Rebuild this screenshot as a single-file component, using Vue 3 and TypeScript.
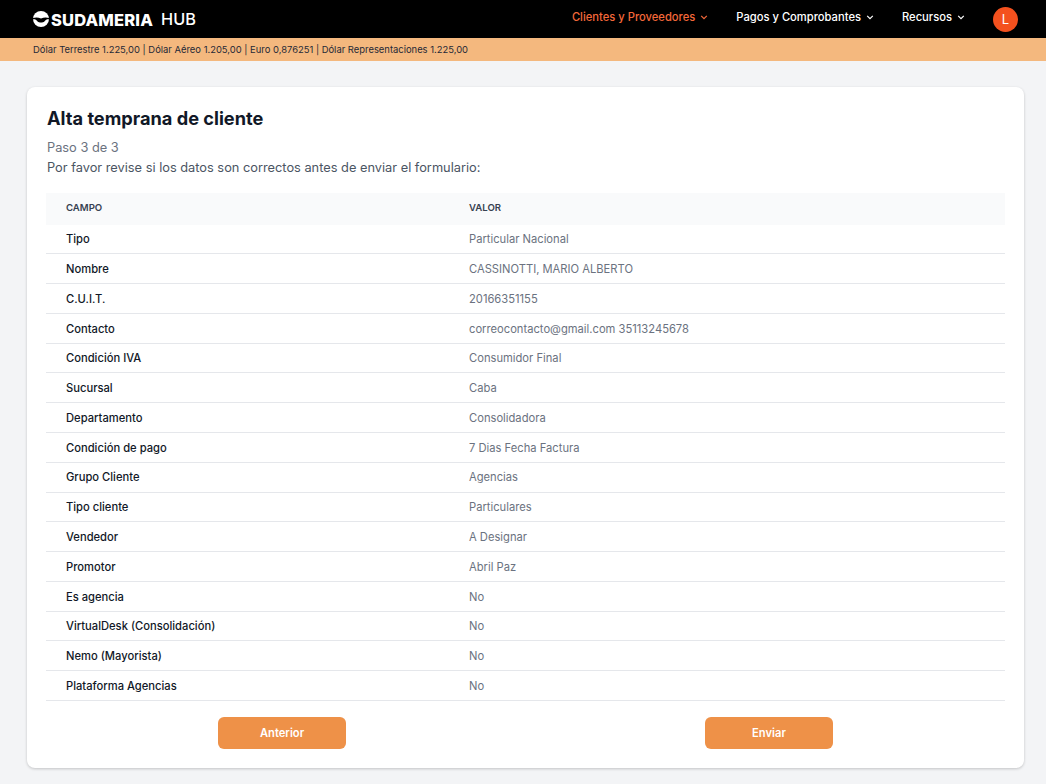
<template>
  <div class="page">
    <header class="topbar">
      <div class="brand">
        <svg class="brand-icon" viewBox="0 0 16 16">
          <circle cx="8" cy="8" r="8" fill="#fff" />
          <path d="M0 7 C3 6 5.5 6.4 8 7.6 C10.5 6.4 13 6 16 7 L16 8.4 C14 8.2 12.8 8.8 11.4 10.4 C10 11.8 6 11.8 4.6 10.4 C3.2 8.8 2 8.2 0 8.4 Z" fill="#000" />
        </svg>
        <span class="brand-name">SUDAMERIA</span>
        <span class="brand-hub">HUB</span>
      </div>
      <nav class="menu">
        <a v-for="item in menu" :key="item.label" class="menu-item" :class="{ active: item.active }">
          {{ item.label }}
          <svg viewBox="0 0 10 10" width="8" height="8"><path d="M1.5 3.5 L5 7 L8.5 3.5" fill="none" stroke="currentColor" stroke-width="1.5" /></svg>
        </a>
        <span class="avatar">L</span>
      </nav>
    </header>
    <div class="rates">Dólar Terrestre 1.225,00 | Dólar Aéreo 1.205,00 | Euro 0,876251 | Dólar Representaciones 1.225,00</div>
    <main class="content">
      <section class="card">
        <h1>Alta temprana de cliente</h1>
        <p class="step">Paso 3 de 3</p>
        <p class="hint">Por favor revise si los datos son correctos antes de enviar el formulario:</p>
        <table>
          <thead>
            <tr>
              <th>CAMPO</th>
              <th>VALOR</th>
            </tr>
          </thead>
          <tbody>
            <tr v-for="row in rows" :key="row[0]">
              <td class="field">{{ row[0] }}</td>
              <td class="value">{{ row[1] }}</td>
            </tr>
          </tbody>
        </table>
        <div class="actions">
          <button>Anterior</button>
          <button>Enviar</button>
        </div>
      </section>
    </main>
  </div>
</template>

<script setup lang="ts">
const menu = [
  { label: 'Clientes y Proveedores', active: true },
  { label: 'Pagos y Comprobantes', active: false },
  { label: 'Recursos', active: false },
];

const rows: [string, string][] = [
  ['Tipo', 'Particular Nacional'],
  ['Nombre', 'CASSINOTTI, MARIO ALBERTO'],
  ['C.U.I.T.', '20166351155'],
  ['Contacto', 'correocontacto@gmail.com 35113245678'],
  ['Condición IVA', 'Consumidor Final'],
  ['Sucursal', 'Caba'],
  ['Departamento', 'Consolidadora'],
  ['Condición de pago', '7 Dias Fecha Factura'],
  ['Grupo Cliente', 'Agencias'],
  ['Tipo cliente', 'Particulares'],
  ['Vendedor', 'A Designar'],
  ['Promotor', 'Abril Paz'],
  ['Es agencia', 'No'],
  ['VirtualDesk (Consolidación)', 'No'],
  ['Nemo (Mayorista)', 'No'],
  ['Plataforma Agencias', 'No'],
];
</script>

<style>
html, body {
  margin: 0;
  background: #f3f4f6;
}
</style>

<style scoped>
.page {
  font-family: Inter, "Liberation Sans", sans-serif;
  min-height: 784px;
  background: #f3f4f6;
}

.topbar {
  height: 38px;
  background: #000;
  color: #fff;
  display: flex;
  align-items: center;
  justify-content: space-between;
  padding: 0 28px 0 33px;
}

.brand {
  display: flex;
  align-items: center;
}

.brand-icon {
  width: 16px;
  height: 16px;
  margin-right: 2px;
}

.brand-name {
  font-weight: 800;
  font-size: 16.5px;
  letter-spacing: 0.15px;
  margin-top: 1px;
}

.brand-hub {
  font-size: 16.3px;
  font-weight: 500;
  margin-left: 8px;
  margin-bottom: 1px;
}

.menu {
  display: flex;
  align-items: center;
  font-size: 11.2px;
  font-weight: 500;
}

.menu-item {
  display: flex;
  align-items: center;
  gap: 5px;
  margin-right: 28px;
  margin-bottom: 5px;
}

.menu-item.active {
  color: #f4683a;
}

.avatar {
  width: 25px;
  height: 25px;
  border-radius: 50%;
  background: #f4511e;
  display: flex;
  align-items: center;
  justify-content: center;
  font-size: 13px;
  font-weight: 400;
}

.rates {
  height: 23px;
  line-height: 23px;
  background: #f4b87e;
  color: #1f2937;
  font-size: 9.42px;
  padding-left: 33px;
}

.content {
  padding: 26px 22px 16px 27px;
}

.card {
  background: #fff;
  border-radius: 8px;
  box-shadow: 0 1px 3px rgba(0, 0, 0, 0.2);
  padding: 20px 19px 20px 19px;
  height: 681px;
  box-sizing: border-box;
}

h1 {
  margin: 0 0 9px 1px;
  font-size: 18.2px;
  line-height: 22px;
  font-weight: 700;
  color: #111827;
}

.step, .hint {
  margin: 0 0 0 0;
  padding-left: 1px;
  font-size: 12.8px;
  line-height: 19px;
}

.step {
  color: #6b7280;
  margin-bottom: 1px;
}

.hint {
  color: #4b5563;
  margin-bottom: 16px;
}

table {
  width: 959px;
  border-collapse: collapse;
  table-layout: fixed;
}

th {
  background: #f9fafb;
  height: 28.5px;
  padding: 0 20px 3px;
  text-align: left;
  font-size: 9.6px;
  font-weight: 600;
  color: #374151;
}

th:first-child, td:first-child {
  width: 363px;
}

td {
  height: 28.2px;
  padding: 0.6px 20px 0;
  font-size: 11.2px;
  border-bottom: 1px solid #e5e7eb;
}

.field {
  color: #111827;
  font-weight: 500;
}

.value {
  color: #6b7280;
}

.actions {
  display: flex;
  justify-content: space-between;
  padding: 0 172px;
  margin-top: 16px;
}

button {
  width: 128px;
  height: 32px;
  border: none;
  border-radius: 6px;
  background: #ee9148;
  color: #fff;
  font-family: inherit;
  font-size: 11.2px;
  font-weight: 600;
}
</style>
